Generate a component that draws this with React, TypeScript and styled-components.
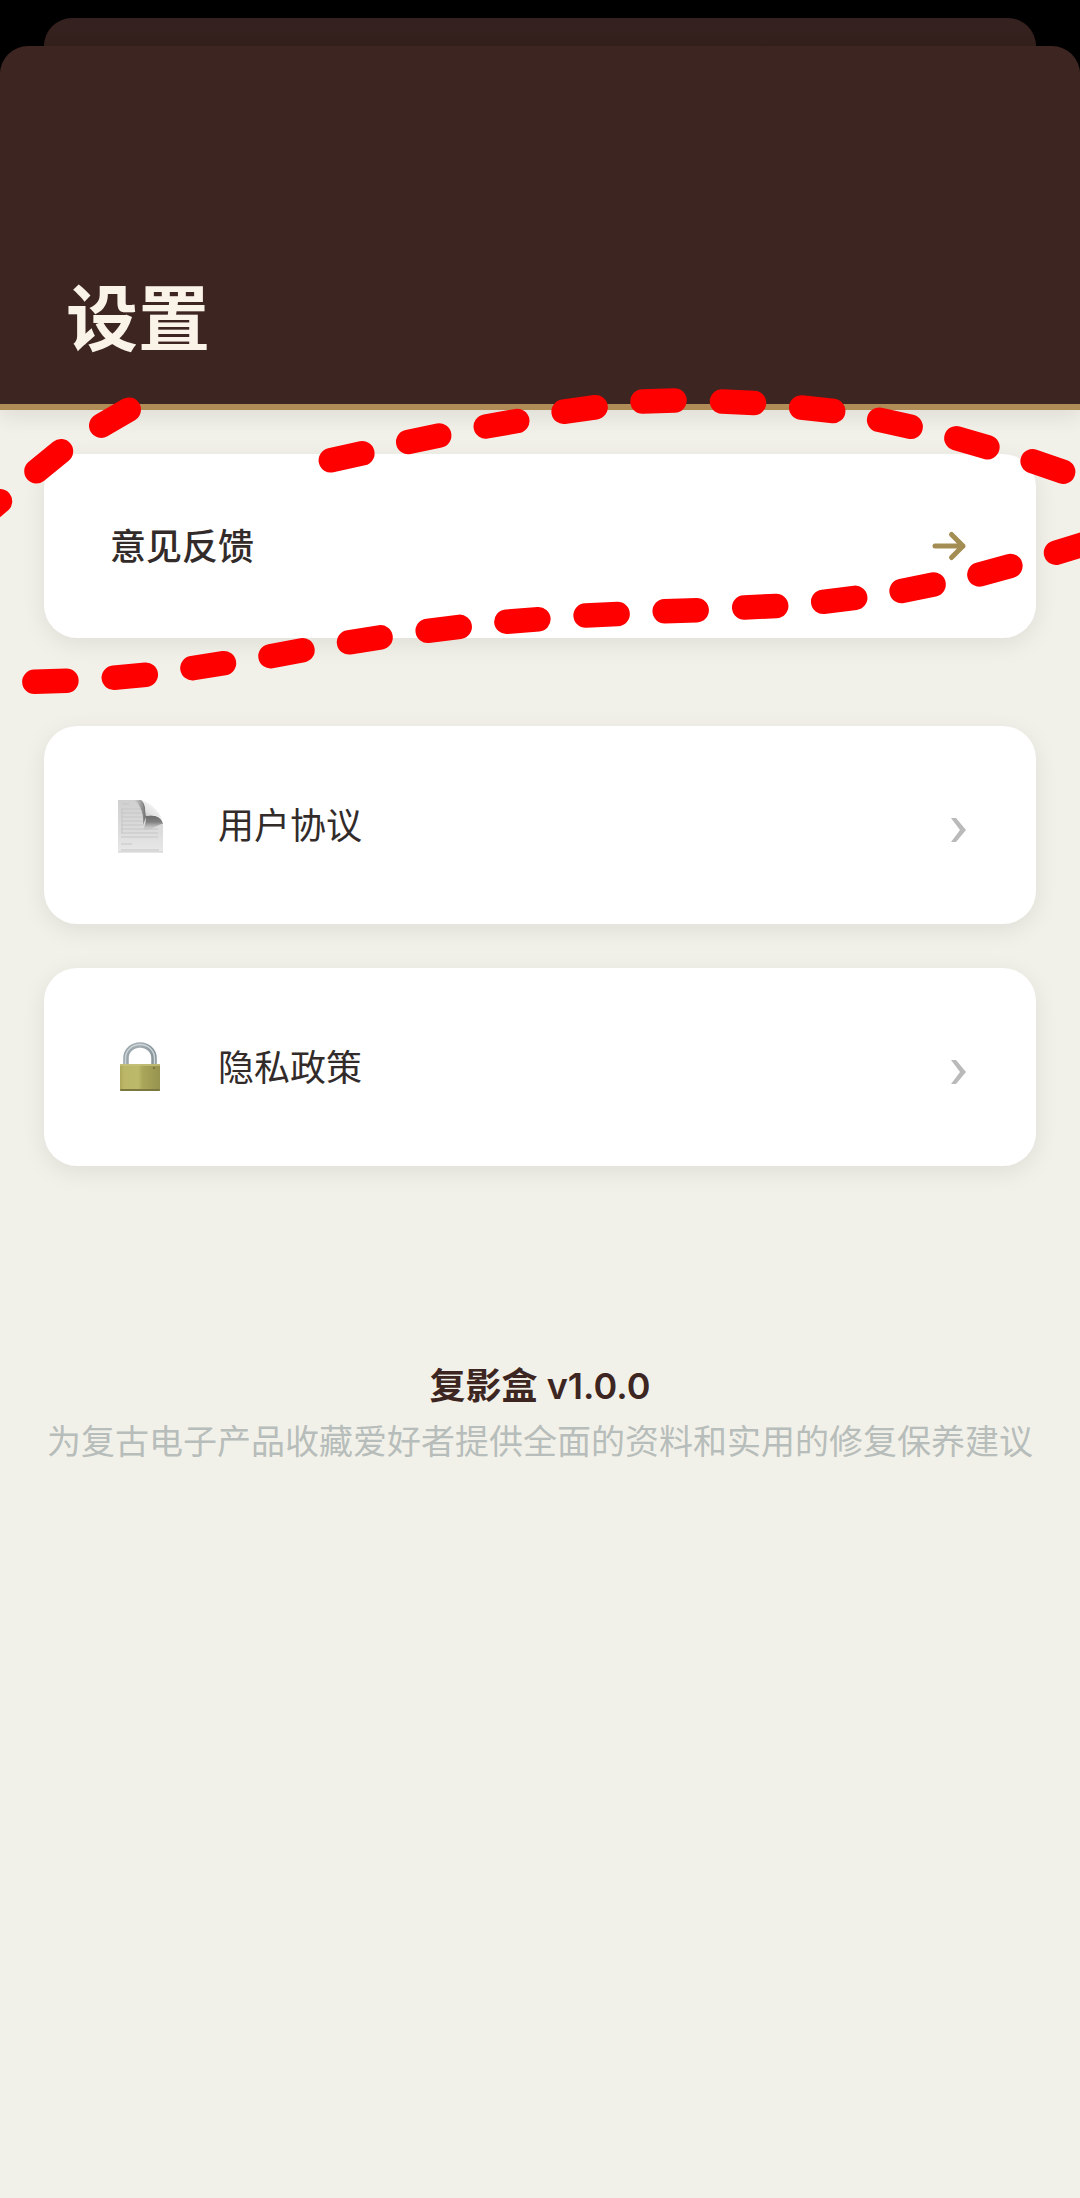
import React from "react";
import styled, { createGlobalStyle } from "styled-components";

const GlobalStyle = createGlobalStyle`
  *, *::before, *::after { box-sizing: border-box; }
  body {
    margin: 0;
    background: #000000;
    font-family: Inter, "Noto Sans CJK SC", sans-serif;
    -webkit-font-smoothing: antialiased;
  }
`;

const Screen = styled.div`
  position: relative;
  display: flex;
  flex-direction: column;
  min-height: 100vh;
  padding-top: 18px;
  overflow: hidden;
  background: #000000;
`;

const PreviousSheet = styled.div`
  height: 28px;
  margin: 0 44px;
  border-radius: 28px 28px 0 0;
  background: linear-gradient(#35211f, #34201c);
`;

const Header = styled.header`
  position: relative;
  z-index: 1;
  padding: 220px 66px 32px;
  border-bottom: 6px solid #b08d57;
  border-radius: 28px 28px 0 0;
  background: #3d2622;
  box-shadow: 0 6px 22px rgba(0, 0, 0, 0.09);
`;

const Title = styled.h1`
  margin: 0;
  color: #faf3e8;
  font-size: 72px;
  line-height: 106px;
  font-weight: 600;
`;

const Content = styled.main`
  flex: 1;
  padding: 44px;
  background: #f2f1e9;
`;

const Card = styled.button`
  display: flex;
  align-items: center;
  width: 100%;
  padding: 0 66px;
  border: 0;
  border-radius: 33px;
  background: #ffffff;
  box-shadow: 0 6px 24px rgba(0, 0, 0, 0.08);
  color: #322b2a;
  font-family: inherit;
  font-size: 36px;
  line-height: 52px;
  text-align: left;
  cursor: pointer;
`;

const FeedbackCard = styled(Card)`
  min-height: 184px;
  padding-top: 2px;
  font-weight: 500;
`;

const LinkCard = styled(Card)`
  min-height: 198px;
  padding-top: 2px;
  gap: 46px;
  font-weight: 400;
`;

const Label = styled.span`
  flex: 1;
`;

const LinkList = styled.nav`
  display: flex;
  flex-direction: column;
  gap: 44px;
  margin-top: 88px;
`;

const EmojiSvg = styled.svg`
  flex: none;
  width: 62px;
  height: 62px;
`;

const ArrowSvg = styled.svg`
  flex: none;
  width: 40px;
  height: 36px;
`;

const ChevronSvg = styled.svg`
  flex: none;
  width: 24px;
  height: 36px;
  margin-top: 8px;
`;

const Footer = styled.footer`
  margin-top: 192px;
  text-align: center;
`;

const Version = styled.p`
  margin: 0;
  color: #3d2622;
  font-size: 36px;
  line-height: 56px;
  font-weight: 600;
`;

const Tagline = styled.p`
  margin: 0;
  color: #b7bdba;
  font-size: 34px;
  line-height: 56px;
  white-space: nowrap;
`;

const Marker = styled.svg`
  position: absolute;
  z-index: 2;
  top: 0;
  left: 0;
  width: 100%;
  pointer-events: none;
`;

/* Each dash: centre x, centre y, run, rise (positive rises to the right). */
const DASHES: number[][] = [
  [-12, 511.5, 24, 20.5],
  [48.7, 461.2, 24.5, 20],
  [115, 417.7, 27.5, 16],
  [346.6, 456.8, 31.5, 7],
  [423.7, 438.8, 31, 6.5],
  [501.5, 423.7, 31.5, 5.5],
  [579.6, 409.5, 32, 4.5],
  [658.5, 401, 32, 1],
  [738, 402.2, 32, -1.5],
  [817.2, 409.3, 32, -3.5],
  [894.9, 423.3, 31.5, -7],
  [971.9, 442.7, 31, -9],
  [1047.9, 466.5, 30.5, -10.5],
  [50.4, 681.3, 32, 1],
  [129.8, 676.2, 32, 3],
  [208.2, 665.7, 31.5, 5],
  [286.5, 653.2, 32, 6],
  [364.8, 639.8, 31.5, 5],
  [443.7, 628.8, 32, 4],
  [522.4, 620.5, 32, 2.5],
  [601.6, 614.7, 32, 1.5],
  [680.7, 610.7, 32, 1],
  [760.2, 606.7, 32, 1.5],
  [839.2, 599.8, 32, 4],
  [917.6, 587.8, 32, 6.5],
  [994.9, 570.2, 31, 8.5],
  [1071.5, 548, 31, 9.5],
];

function DashedMarker() {
  return (
    <Marker viewBox="0 0 1080 720" aria-hidden="true">
      <g stroke="#fe0000" strokeWidth="24.5" strokeLinecap="round">
        {DASHES.map(([x, y, run, rise]) => (
          <line
            key={`${x}-${y}`}
            x1={x - run / 2}
            y1={y + rise / 2}
            x2={x + run / 2}
            y2={y - rise / 2}
          />
        ))}
      </g>
    </Marker>
  );
}

function PageIcon() {
  const lines = [14, 18, 22, 26, 30, 34, 38, 42];
  return (
    <EmojiSvg viewBox="0 0 62 62" aria-hidden="true">
      <defs>
        <linearGradient id="paper" x1="0" y1="0" x2="0" y2="1">
          <stop offset="0" stopColor="#d0d0d0" />
          <stop offset="0.6" stopColor="#dcdcdc" />
          <stop offset="1" stopColor="#e8e8e8" />
        </linearGradient>
        <linearGradient id="fold" x1="0" y1="1" x2="0.7" y2="0.2">
          <stop offset="0" stopColor="#a8a8a8" />
          <stop offset="0.5" stopColor="#e2e2e2" />
          <stop offset="1" stopColor="#f8f8f8" />
        </linearGradient>
        <linearGradient id="shade" x1="0" y1="0" x2="0" y2="1">
          <stop offset="0" stopColor="#6c6c6c" />
          <stop offset="0.45" stopColor="#808080" />
          <stop offset="1" stopColor="#a0a0a0" stopOpacity="0" />
        </linearGradient>
        <linearGradient id="crease" x1="0" y1="0" x2="1" y2="0">
          <stop offset="0" stopColor="#909090" stopOpacity="0" />
          <stop offset="1" stopColor="#686868" />
        </linearGradient>
      </defs>
      <path d="M8 5H31C36 8 35 15 36 21C44 20 52 22 53 30V57H8Z" fill="url(#paper)" />
      <g stroke="#c6c6c6" strokeWidth="1">
        <path d="M12 9H19" />
        {lines.map((y) => (
          <path key={y} d={`M11 ${y}H${y < 34 ? 33 : 48}`} />
        ))}
        <path d="M11 49H22M11 55H49M12 14V38" />
      </g>
      <path d="M24 5H31C36 8 35 15 36 22L33 30C34 20 31 10 24 5Z" fill="url(#crease)" />
      <path d="M31 5C36 9 35 15 36 21C41 19 48 20 52 25C50 17 41 8 31 5Z" fill="url(#fold)" />
      <path d="M36 21C44 19 52 22 53 29C49 28 42 36 33 35C35 31 36 27 36 21Z" fill="url(#shade)" />
      <path d="M8 57H53" stroke="#cccccc" strokeWidth="1" />
    </EmojiSvg>
  );
}

function LockIcon() {
  return (
    <EmojiSvg viewBox="0 0 62 62" aria-hidden="true">
      <defs>
        <linearGradient id="brass" x1="0" y1="0" x2="1" y2="0">
          <stop offset="0" stopColor="#aca75a" />
          <stop offset="0.1" stopColor="#bbb768" />
          <stop offset="0.46" stopColor="#bdb96b" />
          <stop offset="0.56" stopColor="#aaa65a" />
          <stop offset="1" stopColor="#969350" />
        </linearGradient>
        <linearGradient id="steel" x1="0" y1="0" x2="1" y2="0">
          <stop offset="0" stopColor="#98a4a9" />
          <stop offset="0.5" stopColor="#a4afb4" />
          <stop offset="1" stopColor="#87949a" />
        </linearGradient>
      </defs>
      <path d="M16 29V21A14 13 0 0 1 44 21V29" fill="none" stroke="url(#steel)" strokeWidth="5.500" />
      <path d="M15.500 29V21A14.500 13.500 0 0 1 44.500 21V29" fill="none" stroke="#ccd4d7" strokeWidth="1.500" />
      <rect x="10" y="27" width="40" height="27" rx="1" fill="url(#brass)" />
      <path d="M10 28H50" stroke="#c6c27c" strokeWidth="1.500" />
      <rect x="10" y="52" width="40" height="2" rx="1" fill="#7b783f" />
      <circle cx="44" cy="31" r="1.200" fill="#7b783f" />
    </EmojiSvg>
  );
}

function Arrow() {
  return (
    <ArrowSvg viewBox="0 0 40 36" aria-hidden="true">
      <path
        d="M5 17H33M21.500 5.500L33 17L21.500 28.500"
        fill="none"
        stroke="#a38d52"
        strokeWidth="5"
        strokeLinecap="round"
        strokeLinejoin="round"
      />
    </ArrowSvg>
  );
}

function Chevron() {
  return (
    <ChevronSvg viewBox="0 0 24 36" aria-hidden="true">
      <path d="M5 6H10L20 18L10 30H5L14 18Z" fill="#b9bab9" />
    </ChevronSvg>
  );
}

export default function App() {
  return (
    <>
      <GlobalStyle />
      <Screen>
        <PreviousSheet />
        <Header>
          <Title>设置</Title>
        </Header>
        <Content>
          <FeedbackCard type="button">
            <Label>意见反馈</Label>
            <Arrow />
          </FeedbackCard>
          <LinkList>
            <LinkCard type="button">
              <PageIcon />
              <Label>用户协议</Label>
              <Chevron />
            </LinkCard>
            <LinkCard type="button">
              <LockIcon />
              <Label>隐私政策</Label>
              <Chevron />
            </LinkCard>
          </LinkList>
          <Footer>
            <Version>复影盒 v1.0.0</Version>
            <Tagline>为复古电子产品收藏爱好者提供全面的资料和实用的修复保养建议</Tagline>
          </Footer>
        </Content>
        <DashedMarker />
      </Screen>
    </>
  );
}
